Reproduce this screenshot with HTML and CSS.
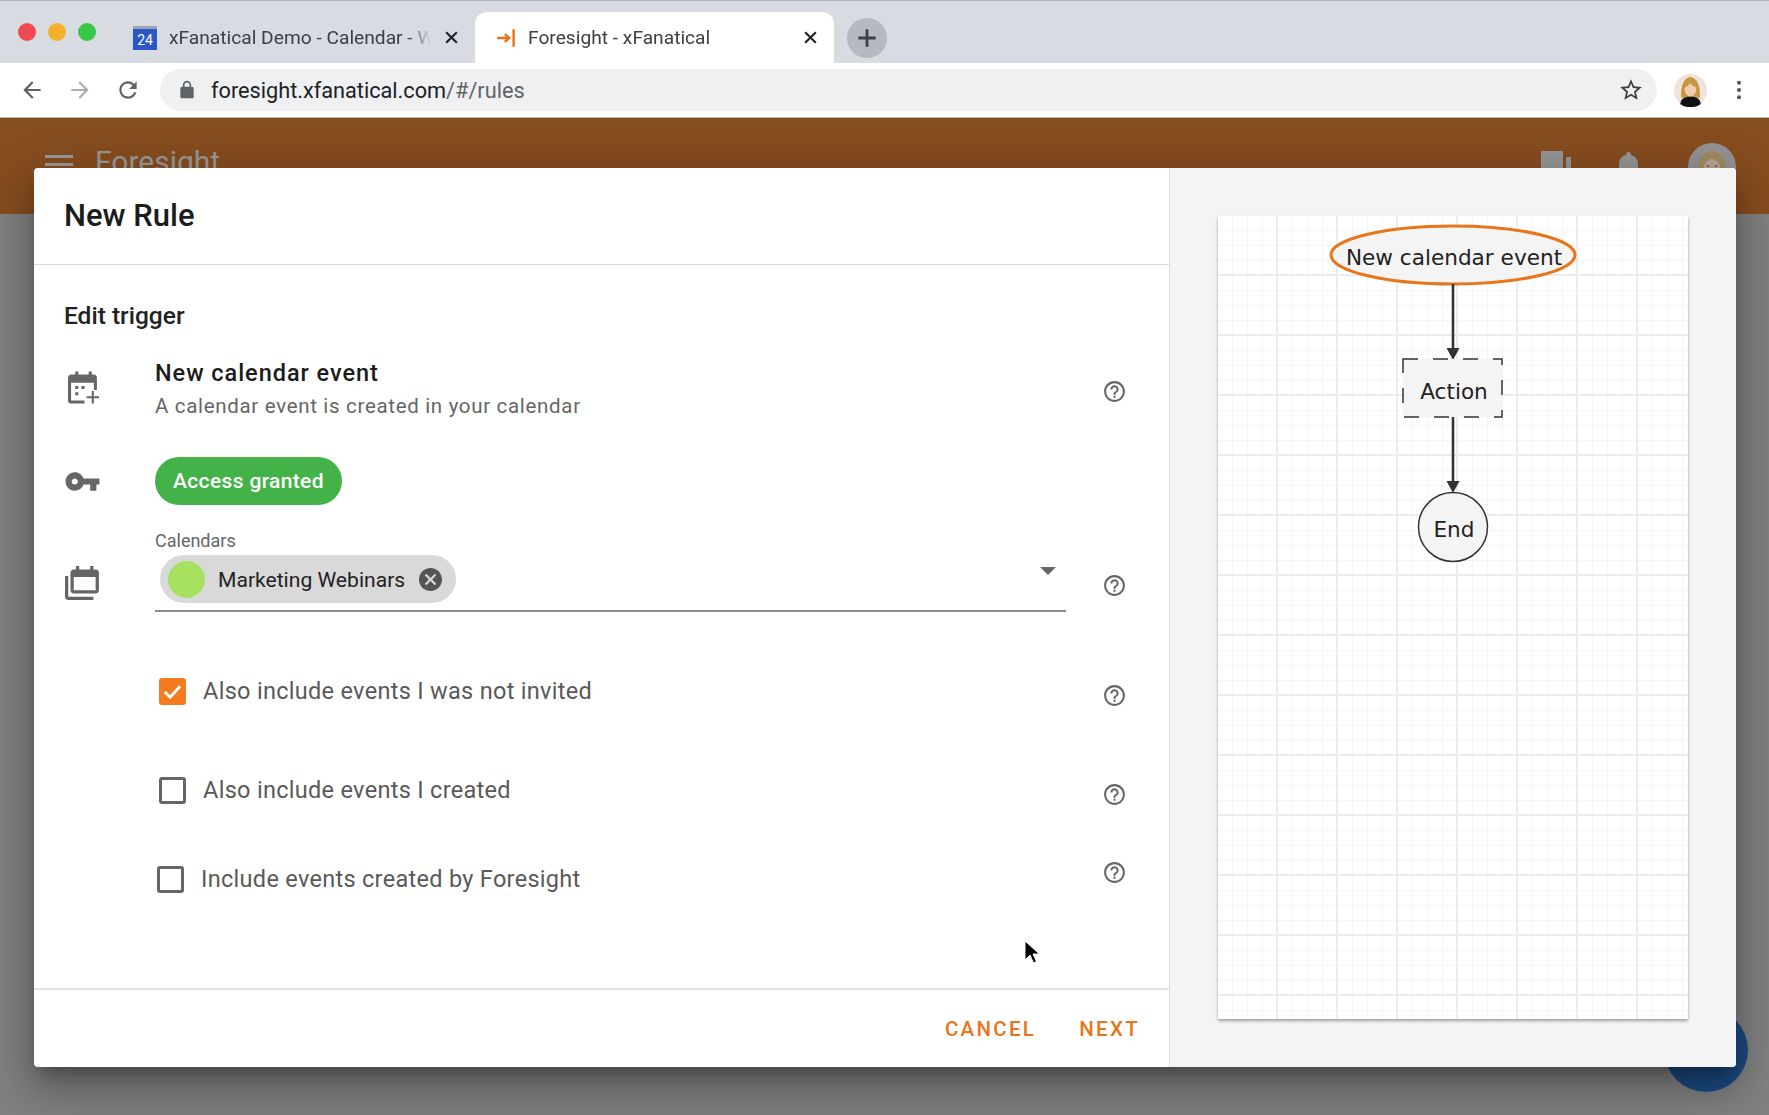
FILE: index.html
```html
<!DOCTYPE html>
<html>
    <head>
        <title>Foresight - xFanatical</title>
        <meta name="viewport" content="width=device-width, initial-scale=1">
        <link rel="stylesheet" href="styles.css">
    </head>

    <body>
        <!-- Browser tabs -->
        <div class="tabstrip">
            <div class="traffic">
                <span class="light red"></span>
                <span class="light yellow"></span>
                <span class="light green"></span>
            </div>
            <div class="tab">
                <span class="cal-favicon"><span class="cal-day">24</span></span>
                <span class="tab-title">xFanatical Demo - Calendar - W</span>
                <svg class="tab-close" viewBox="0 0 14 14"><path d="M2 2l10 10M12 2L2 12"/></svg>
            </div>
            <div class="tab active">
                <svg class="fs-favicon" viewBox="0 0 20 20"><path d="M1 10h10M8 6.500l4 3.500-4 3.500M16 2v16" fill="none" stroke="#e8751a" stroke-width="2.200"/></svg>
                <span class="tab-title">Foresight - xFanatical</span>
                <svg class="tab-close" viewBox="0 0 14 14"><path d="M2 2l10 10M12 2L2 12"/></svg>
            </div>
            <div class="new-tab">
                <svg viewBox="0 0 24 24"><path d="M12 4v16M4 12h16" fill="none" stroke="#3c4043" stroke-width="2.600"/></svg>
            </div>
        </div>

        <!-- Address bar -->
        <div class="toolbar">
            <svg class="nav-icon" viewBox="0 0 24 24"><path fill="#5f6368" d="M20 11H7.830l5.590-5.590L12 4l-8 8 8 8 1.410-1.410L7.830 13H20v-2z"/></svg>
            <svg class="nav-icon" viewBox="0 0 24 24"><path fill="#a9adb1" d="M4 11h12.170l-5.590-5.590L12 4l8 8-8 8-1.410-1.410L16.170 13H4v-2z"/></svg>
            <svg class="nav-icon" viewBox="0 0 24 24"><path fill="#5f6368" d="M17.650 6.350C16.200 4.900 14.210 4 12 4c-4.420 0-7.990 3.580-7.990 8s3.570 8 7.990 8c3.730 0 6.840-2.550 7.730-6h-2.080c-.82 2.330-3.040 4-5.650 4-3.310 0-6-2.690-6-6s2.690-6 6-6c1.660 0 3.140.69 4.220 1.780L13 11h7V4l-2.350 2.350z"/></svg>
            <div class="omnibox">
                <svg class="lock" viewBox="0 0 24 24"><path fill="#5f6368" fill-rule="evenodd" d="M18 8h-1V6c0-2.760-2.240-5-5-5S7 3.240 7 6v2H6c-1.100 0-2 .9-2 2v10c0 1.100.9 2 2 2h12c1.100 0 2-.9 2-2V10c0-1.100-.9-2-2-2zM9 6c0-1.660 1.340-3 3-3s3 1.340 3 3v2H9V6z"/></svg>
                <span class="url">foresight.xfanatical.com<span class="url-path">/#/rules</span></span>
                <svg class="star" viewBox="0 0 24 24"><path fill="#3c4043" d="M22 9.240l-7.190-.62L12 2 9.190 8.630 2 9.240l5.460 4.730L5.820 21 12 17.270 18.180 21l-1.630-7.030L22 9.240zM12 15.400l-3.760 2.270 1-4.280-3.320-2.880 4.380-.38L12 6.100l1.710 4.040 4.380.38-3.320 2.880 1 4.280L12 15.400z"/></svg>
            </div>
            <svg class="profile" viewBox="0 0 32 32">
                <circle cx="16" cy="16" r="16" fill="#efe3dd"/>
                <path d="M7 23C6 12 10 3 16 3s10 9 9 20z" fill="#c9953f"/>
                <ellipse cx="16" cy="15" rx="5.500" ry="7" fill="#f3cdb0"/>
                <path d="M10.500 13c1-4 3-6 5.500-6 3 0 5 3 5.500 6-3-1-5-3-6-4-1 2-3 3-5 4z" fill="#c9953f"/>
                <path d="M6 29c1-6 5-7 10-7s9 1 10 7c-3 2.500-6 3-10 3s-7-.5-10-3z" fill="#111"/>
            </svg>
            <svg class="chrome-menu" viewBox="0 0 6 22"><circle cx="3" cy="3" r="2.200"/><circle cx="3" cy="11" r="2.200"/><circle cx="3" cy="19" r="2.200"/></svg>
        </div>

        <!-- The app behind the dialog -->
        <div class="appbar">
            <div class="burger"><span></span><span></span><span></span></div>
            <span class="app-name">Foresight</span>
            <div class="app-doc"></div>
            <div class="app-doc-bar"></div>
            <svg class="app-bell" viewBox="0 0 19 30"><path d="M7 4c0-2 1-3 2.500-3S12 2 12 4c4 1 7 4 7 9v17H0V13c0-5 3-8 7-9z" fill="#959595"/></svg>
            <svg class="app-avatar" viewBox="0 0 48 48">
                <circle cx="24" cy="24" r="24" fill="#939393"/>
                <ellipse cx="24" cy="26" rx="14" ry="18" fill="#a08a5e"/>
                <ellipse cx="24" cy="28" rx="9" ry="12" fill="#b6a594"/>
                <circle cx="20" cy="23" r="1" fill="#444"/>
                <circle cx="28" cy="23" r="1" fill="#444"/>
            </svg>
        </div>
        <div class="fab"></div>

        <div class="dialog">
            <div class="form">
                <div class="form-head">New Rule</div>

                <div class="form-body">
                    <h3 class="section">Edit trigger</h3>

                    <div class="row trigger-row">
                        <svg class="row-icon event-icon" viewBox="0 0 30 32"><path fill="#666" fill-rule="evenodd" d="M7 0h3v3h10V0h3v3h2c1.700 0 3 1.300 3 3v12h-3v-7H3v17h13v3H3c-1.700 0-3-1.300-3-3V6c0-1.700 1.300-3 3-3h4z"/><path fill="#666" d="M7 14h3v3H7zM13 14h3v3h-3zM7 20h3v3H7zM23 19h2v5h5v2h-5v5h-2v-5h-5v-2h5z"/></svg>
                        <div class="row-main">
                            <div class="trigger-name">New calendar event</div>
                            <div class="trigger-desc">A calendar event is created in your calendar</div>
                        </div>
                        <svg class="help trigger-help" viewBox="0 0 24 24"><use href="#help-path"/></svg>
                    </div>

                    <div class="row access-row">
                        <svg class="row-icon key-icon" viewBox="0 0 24 24"><path fill="#666" d="M12.650 10C11.830 7.670 9.610 6 7 6c-3.310 0-6 2.690-6 6s2.690 6 6 6c2.610 0 4.830-1.670 5.650-4H17v4h4v-4h2v-4H12.650zM7 14c-1.100 0-2-.9-2-2s.9-2 2-2 2 .9 2 2-.9 2-2 2z"/></svg>
                        <div class="row-main"><span class="pill">Access granted</span></div>
                    </div>

                    <div class="row calendars-row">
                        <svg class="row-icon stack-icon" viewBox="0 0 32 32"><path fill="#666" fill-rule="evenodd" d="M10 1h3v3h10V1h3v3h2c1.700 0 3 1.300 3 3v16c0 1.700-1.300 3-3 3H8c-1.700 0-3-1.300-3-3V7c0-1.700 1.300-3 3-3h2zM8 11v12h20V11z"/><path fill="#666" d="M0 10h3v19h23v3H3c-1.700 0-3-1.300-3-3z"/></svg>
                        <div class="row-main">
                            <label class="field-label">Calendars</label>
                            <div class="select">
                                <div class="chip">
                                    <span class="chip-color"></span>
                                    <span class="chip-text">Marketing Webinars</span>
                                    <svg class="chip-remove" viewBox="2 2 20 20"><path fill="#555" d="M12 2C6.470 2 2 6.470 2 12s4.470 10 10 10 10-4.470 10-10S17.530 2 12 2zm5 13.590L15.590 17 12 13.410 8.410 17 7 15.590 10.590 12 7 8.410 8.410 7 12 10.590 15.590 7 17 8.410 13.410 12 17 15.590z"/></svg>
                                </div>
                                <span class="caret"></span>
                            </div>
                        </div>
                        <svg class="help calendars-help" viewBox="0 0 24 24"><use href="#help-path"/></svg>
                    </div>

                    <div class="row check-row first">
                        <span class="check checked">
                            <svg viewBox="0 0 24 24"><path d="M4 12.500l5.500 5.500L20 6.500" fill="none" stroke="#fff" stroke-width="3"/></svg>
                        </span>
                        <span class="check-text">Also include events I was not invited</span>
                        <svg class="help lower" viewBox="0 0 24 24"><use href="#help-path"/></svg>
                    </div>
                    <div class="row check-row second">
                        <span class="check"></span>
                        <span class="check-text">Also include events I created</span>
                        <svg class="help lower" viewBox="0 0 24 24"><use href="#help-path"/></svg>
                    </div>
                    <div class="row check-row third">
                        <span class="check"></span>
                        <span class="check-text">Include events created by Foresight</span>
                        <svg class="help higher" viewBox="0 0 24 24"><use href="#help-path"/></svg>
                    </div>
                </div>

                <div class="form-foot">
                    <button class="btn">Cancel</button>
                    <button class="btn">Next</button>
                </div>
            </div>

            <div class="preview">
                <div class="paper">
                    <!-- flow chart, coordinates are relative to the paper -->
                    <svg class="chart" viewBox="0 0 470 803">
                        <ellipse cx="235" cy="39" rx="122" ry="29" fill="#f4f4f4" stroke="#e8751a" stroke-width="3"/>
                        <text x="236" y="49" class="chart-text">New calendar event</text>

                        <path d="M235 68v70" stroke="#333" stroke-width="2.600"/>
                        <path d="M228.500 132h13L235 144z" fill="#333"/>

                        <rect x="185" y="143" width="99" height="58" fill="#f4f4f4" stroke="#333" stroke-width="1.500" stroke-dasharray="15 15"/>
                        <text x="236" y="183" class="chart-text">Action</text>

                        <path d="M235 201v70" stroke="#333" stroke-width="2.600"/>
                        <path d="M228.500 265h13L235 277z" fill="#333"/>

                        <circle cx="235" cy="311" r="34.500" fill="#f4f4f4" stroke="#333" stroke-width="1.500"/>
                        <text x="236" y="321" class="chart-text">End</text>
                    </svg>
                </div>
            </div>
        </div>

        <svg class="cursor" viewBox="0 0 16 26"><path d="M1 1v19l5-5 3.500 8 3-1.500L9 14h6.500z" fill="#000" stroke="#fff" stroke-width="1"/></svg>

        <svg class="defs"><defs><path id="help-path" fill="#666" d="M11 18h2v-2h-2v2zm1-16C6.480 2 2 6.480 2 12s4.480 10 10 10 10-4.480 10-10S17.520 2 12 2zm0 18c-4.410 0-8-3.590-8-8s3.590-8 8-8 8 3.590 8 8-3.590 8-8 8zm0-14c-2.210 0-4 1.790-4 4h2c0-1.100.9-2 2-2s2 .9 2 2c0 2-3 1.750-3 5h2c0-2.250 3-2.500 3-5 0-2.210-1.790-4-4-4z"/></defs></svg>
    </body>
</html>
```

FILE: styles.css
```css
* {
    box-sizing: border-box;
}
html, body {
    margin: 0;
    height: 100%;
}
body {
    position: relative;
    width: 1769px;
    height: 1115px;
    overflow: hidden;
    font-family: Roboto, "Liberation Sans", sans-serif;
    background-color: #808080;
}

/* browser chrome */
.tabstrip {
    display: flex;
    align-items: flex-end;
    height: 63px;
    background-color: #d8dbe2;
    border-top: 1px solid #b4b7bf;
}
.traffic {
    display: flex;
    gap: 12px;
    align-self: flex-start;
    width: 126px;
    margin-top: 22px;
    padding-left: 18px;
}
.light {
    width: 18px;
    height: 18px;
    border-radius: 50%;
}
.light.red { background-color: #ee4b52; }
.light.yellow { background-color: #f5b02e; }
.light.green { background-color: #36c748; }
.tab {
    display: flex;
    align-items: center;
    width: 349px;
    height: 51px;
    padding: 0 16px 0 7px;
    font-size: 19.200px;
    color: #3c4043;
}
.tab.active {
    width: 359px;
    padding-left: 21px;
    background-color: #fff;
    border-radius: 12px 12px 0 0;
}
.cal-favicon {
    display: flex;
    align-items: flex-end;
    justify-content: center;
    flex: none;
    width: 24px;
    height: 24px;
    border-top: 3px solid #9aa3b4;
    background-color: #2a56c6;
}
.cal-day {
    font-size: 14px;
    line-height: 19px;
    color: #fff;
}
.fs-favicon {
    flex: none;
    width: 22px;
    height: 22px;
}
.tab-title {
    flex: 1;
    min-width: 0;
    margin-left: 12px;
    overflow: hidden;
    white-space: nowrap;
    -webkit-mask-image: linear-gradient(to right, #000 90%, transparent 99%);
    mask-image: linear-gradient(to right, #000 90%, transparent 99%);
}
.tab.active .tab-title {
    margin-left: 10px;
}
.tab-close {
    flex: none;
    width: 15px;
    height: 15px;
    margin-left: 10px;
    fill: none;
    stroke: #222;
    stroke-width: 2;
}
.new-tab {
    display: flex;
    align-items: center;
    justify-content: center;
    align-self: flex-start;
    width: 40px;
    height: 40px;
    margin: 17px 0 0 13px;
    border-radius: 50%;
    background-color: #b6b9c1;
}
.new-tab svg {
    width: 26px;
    height: 26px;
}
.toolbar {
    display: flex;
    align-items: center;
    height: 55px;
    padding: 0 0 0 19px;
    background-color: #fff;
    border-bottom: 1px solid #bbb;
}
.nav-icon {
    flex: none;
    width: 26px;
    height: 26px;
    margin-right: 22px;
}
.omnibox {
    display: flex;
    align-items: center;
    width: 1497px;
    height: 42px;
    margin-left: -3px;
    padding: 0 13px 0 17px;
    border-radius: 21px;
    background-color: #eef0f2;
}
.lock {
    flex: none;
    width: 20px;
    height: 20px;
}
.url {
    flex: 1;
    margin-left: 14px;
    font-size: 21.700px;
    color: #202124;
}
.url-path {
    color: #5f6368;
}
.star {
    width: 26px;
    height: 26px;
}
.profile {
    flex: none;
    width: 33px;
    height: 33px;
    margin-left: 17px;
}
.chrome-menu {
    flex: none;
    width: 6px;
    height: 20px;
    margin-left: 29px;
    fill: #555;
}

/* app behind the dialog */
.appbar {
    display: flex;
    align-items: flex-start;
    height: 96px;
    padding: 33px 33px 0 45px;
    background-color: #864d1f;
}
.burger {
    width: 28px;
    margin-top: 4px;
}
.burger span {
    display: block;
    height: 3px;
    margin-bottom: 5px;
    background-color: #999;
}
.app-name {
    flex: 1;
    margin: -7px 0 0 22px;
    font-size: 30px;
    color: #999;
}
.app-doc {
    width: 22px;
    height: 30px;
    background-color: #959595;
}
.app-doc-bar {
    width: 5px;
    height: 20px;
    margin: 6px 0 0 3px;
    background-color: #959595;
}
.app-bell {
    width: 19px;
    height: 30px;
    margin-left: 48px;
}
.app-avatar {
    width: 48px;
    height: 48px;
    margin: -8px 0 0 50px;
}
.fab {
    position: absolute;
    left: 1664px;
    top: 1008px;
    width: 84px;
    height: 84px;
    border-radius: 50%;
    background-color: #1b4a80;
}

/* dialog */
.dialog {
    position: absolute;
    left: 34px;
    top: 168px;
    display: flex;
    width: 1702px;
    height: 899px;
    border-radius: 4px;
    overflow: hidden;
    background-color: #fff;
    box-shadow: 0 11px 15px -7px rgba(0, 0, 0, 0.3), 0 24px 38px 3px rgba(0, 0, 0, 0.18), 0 9px 46px 8px rgba(0, 0, 0, 0.14);
}
.form {
    display: flex;
    flex-direction: column;
    width: 1136px;
    border-right: 1px solid #ddd;
}
.form-head {
    height: 97px;
    padding: 30px 0 0 30px;
    font-size: 31px;
    line-height: 36px;
    font-weight: 500;
    color: #1c1c1c;
    border-bottom: 1px solid #d8d8d8;
}
.form-body {
    flex: 1;
    padding: 36px 0 0 30px;
}
.section {
    margin: 0;
    font-size: 24.500px;
    line-height: 30px;
    font-weight: 500;
    color: #222;
}
.row {
    display: flex;
    align-items: center;
}
.row-icon {
    flex: none;
    width: 34px;
    height: 34px;
    margin-right: 57px;
}
.event-icon {
    width: 31px;
    margin: 0 56px 4px 4px;
}
.key-icon {
    width: 37px;
    height: 37px;
    margin: 0 54px 0 0;
}
.stack-icon {
    width: 35px;
    height: 35px;
    margin: 22px 55px 0 1px;
}
.row-main {
    width: 911px;
}
.help {
    flex: none;
    width: 25px;
    height: 25px;
    margin-left: 36px;
}
.trigger-help {
    margin-top: 2px;
}
.calendars-help {
    margin-top: 28px;
}
.help.lower {
    margin-top: 8px;
}
.help.higher {
    margin-bottom: 14px;
}
.trigger-row {
    margin-top: 25px;
    height: 68px;
}
.trigger-name {
    font-size: 23.500px;
    line-height: 33px;
    font-weight: 500;
    letter-spacing: 0.95px;
    color: #1c1c1c;
}
.trigger-desc {
    font-size: 20.500px;
    line-height: 33px;
    letter-spacing: 0.68px;
    color: #666;
}
.access-row {
    margin-top: 33px;
}
.pill {
    display: inline-block;
    height: 48px;
    padding: 0 18px;
    font-size: 21px;
    line-height: 48px;
    font-weight: 500;
    letter-spacing: 0.35px;
    color: #fff;
    border-radius: 24px;
    background-color: #43b349;
}
.calendars-row {
    margin-top: 26px;
}
.field-label {
    display: block;
    font-size: 18px;
    line-height: 20px;
    color: #666;
}
.select {
    display: flex;
    align-items: flex-start;
    justify-content: space-between;
    height: 61px;
    padding: 4px 8px 0 5px;
    border-bottom: 2px solid #8b8b8b;
}
.chip {
    display: flex;
    align-items: center;
    width: 296px;
    height: 48px;
    padding: 0 14px 0 8px;
    border-radius: 24px;
    background-color: #d9d9d9;
}
.chip-color {
    flex: none;
    width: 37px;
    height: 37px;
    border-radius: 50%;
    background-color: #a8e05f;
}
.chip-text {
    flex: 1;
    margin-left: 13px;
    font-size: 21.100px;
    color: #222;
}
.chip-remove {
    width: 23px;
    height: 23px;
}
.caret {
    width: 0;
    height: 0;
    margin: 12px 2px 0 0;
    border-left: 8px solid transparent;
    border-right: 8px solid transparent;
    border-top: 8px solid #666;
}
.check-row {
    height: 40px;
    padding-left: 95px;
}
.check-row.first { margin-top: 59px; }
.check-row.second { margin-top: 59px; }
.check-row.third {
    margin-top: 49px;
    padding-left: 93px;
}
.check {
    display: flex;
    flex: none;
    width: 27px;
    height: 27px;
    margin-right: 17px;
    border: 3px solid #666;
    border-radius: 3px;
}
.check.checked {
    border: none;
    background-color: #f47b20;
    padding: 2px;
}
.check-text {
    width: 863px;
    font-size: 23.500px;
    letter-spacing: 0.3px;
    color: #595959;
}
.third .check-text {
    width: 865px;
}
.form-foot {
    display: flex;
    justify-content: flex-end;
    align-items: center;
    gap: 43px;
    height: 79px;
    padding-right: 29px;
    border-top: 2px solid #e4e4e4;
}
.btn {
    padding: 0;
    border: none;
    background: none;
    font-family: inherit;
    font-size: 20.500px;
    font-weight: 500;
    letter-spacing: 2.300px;
    text-transform: uppercase;
    color: #e8751a;
}

/* flow chart */
.preview {
    flex: 1;
    padding: 48px;
    background-color: #f4f4f4;
}
.paper {
    height: 803px;
    background-color: #fff;
    box-shadow: 0 2px 3px rgba(0, 0, 0, 0.35);
    background-image:
        linear-gradient(to right, #ececec 2px, transparent 2px),
        linear-gradient(to bottom, #ececec 2px, transparent 2px),
        linear-gradient(to right, #f5f5f5 1px, transparent 1px),
        linear-gradient(to bottom, #f5f5f5 1px, transparent 1px);
    background-size: 60px 60px, 60px 60px, 15px 15px, 15px 15px;
    background-position: 58px 0, 0 58px, 14px 0, 0 14px;
}
.chart {
    display: block;
    width: 470px;
    height: 803px;
}
.chart-text {
    font-family: "DejaVu Sans", sans-serif;
    font-size: 21.600px;
    fill: #222;
    text-anchor: middle;
}
.cursor {
    position: absolute;
    left: 1024px;
    top: 940px;
    width: 16px;
    height: 26px;
}
.defs {
    position: absolute;
    width: 0;
    height: 0;
}
```
